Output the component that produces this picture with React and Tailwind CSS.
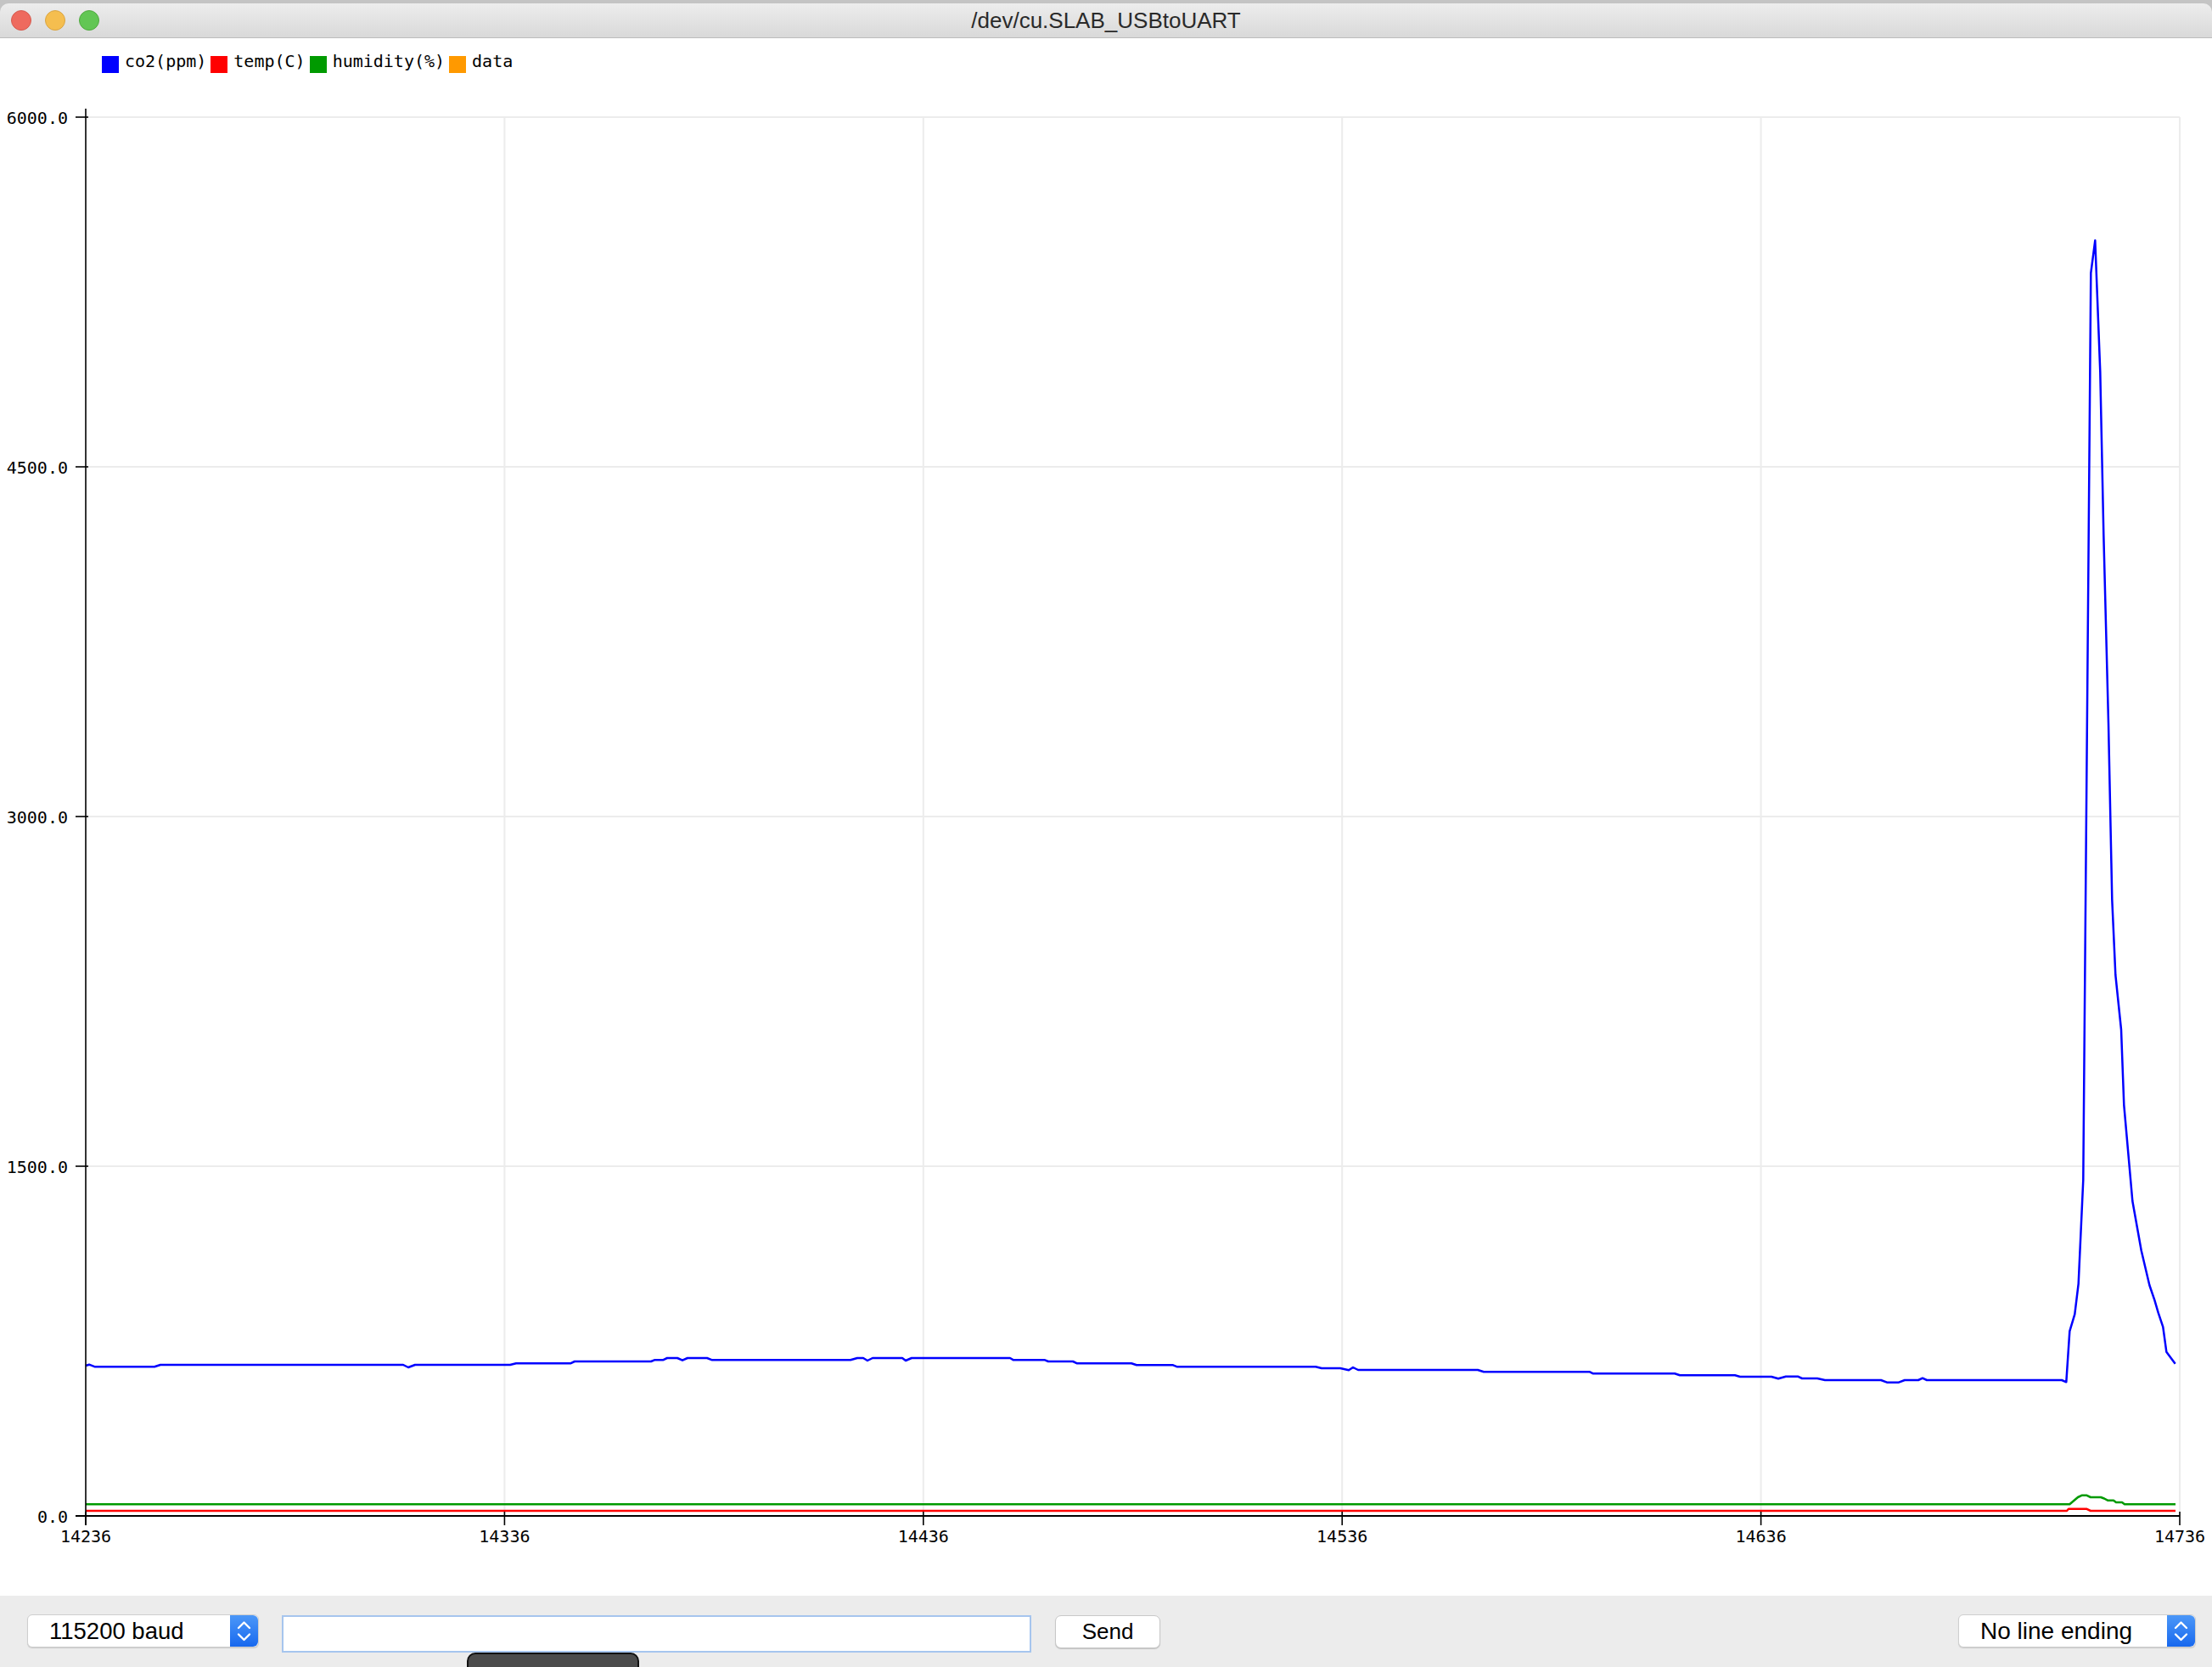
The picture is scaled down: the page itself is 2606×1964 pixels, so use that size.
import React from "react";

const BLUE = [
  [101, 1609], [105, 1607.7], [112, 1610.3], [182, 1610.3], [189, 1608], [475, 1608], [481, 1611], [489, 1608],
  [601, 1608], [608, 1606.3], [672, 1606.3], [677, 1604], [767, 1604], [771, 1602.3], [781, 1602.3], [786, 1600],
  [798, 1600], [804, 1602.7], [810, 1600], [833, 1600], [839, 1602.3], [1002, 1602.3], [1010, 1600], [1017, 1600],
  [1022, 1603], [1028, 1600], [1063, 1600], [1067, 1603], [1074, 1600], [1190, 1600], [1194, 1602.3], [1231, 1602.3],
  [1235, 1604], [1264, 1604], [1269, 1606.3], [1333, 1606.3], [1339, 1608.3], [1382, 1608.3], [1387, 1610.3],
  [1550, 1610.3], [1557, 1612], [1579, 1612], [1589, 1614.3], [1594, 1611], [1600, 1614], [1741, 1614],
  [1748, 1616.3], [1873, 1616.3], [1877, 1618.3], [1973, 1618.3], [1979, 1620.3], [2044, 1620.3], [2050, 1622],
  [2087, 1622], [2095, 1624.3], [2104, 1621.7], [2118, 1621.7], [2123, 1624], [2141, 1624], [2150, 1626],
  [2216, 1626], [2223, 1628.7], [2237, 1628.7], [2244, 1626], [2260, 1626], [2265, 1623.7], [2270, 1626],
  [2429, 1626], [2434.3, 1628.3], [2438.3, 1568.3], [2444.3, 1548.3], [2448.7, 1512.3], [2454.3, 1390],
  [2463.3, 321.7], [2468.3, 283.3], [2474.3, 438.4], [2478.3, 630], [2484, 851.7], [2488.3, 1060],
  [2492.3, 1148.7], [2499, 1213], [2502.3, 1301.8], [2512.3, 1415], [2522.7, 1473.3], [2532.3, 1514],
  [2538.3, 1531.7], [2542.7, 1546.7], [2548.3, 1563.3], [2552.3, 1592.7], [2562.7, 1606.7],
];

const GREEN = [
  [101, 1772.3], [2438.3, 1772.3], [2448, 1764], [2453, 1761.7], [2458, 1761.7], [2463, 1764], [2475, 1764],
  [2479, 1765.5], [2483, 1767.7], [2490, 1767.7], [2493, 1770], [2500, 1770], [2503, 1772.3], [2563, 1772.3],
];

const RED = [
  [101, 1780], [2435, 1780], [2437, 1777.7], [2458, 1777.7], [2463, 1780], [2563, 1780],
];

const toPath = (pts) => "M" + pts.map((p) => p[0] + "," + p[1]).join(" L");

const X0 = 101;
const X1 = 2568;
const Y_TOP = 138;
const Y0 = 1786;
const yTicks = [
  { label: "6000.0", y: 138 },
  { label: "4500.0", y: 550 },
  { label: "3000.0", y: 962 },
  { label: "1500.0", y: 1374 },
  { label: "0.0", y: 1786 },
];
const xTicks = [14236, 14336, 14436, 14536, 14636, 14736].map((v, i) => ({
  label: String(v),
  x: X0 + ((X1 - X0) / 5) * i,
}));

function Chart() {
  const mono = "'DejaVu Sans Mono', 'Liberation Mono', monospace";
  return (
    <svg width="2606" height="1780" viewBox="0 100 2606 1780" className="block shrink-0">
      {/* grid */}
      {yTicks.slice(0, 4).map((t) => (
        <line key={t.label} x1={X0} x2={X1} y1={t.y} y2={t.y} stroke="#ececec" strokeWidth="2" />
      ))}
      {xTicks.slice(1).map((t) => (
        <line key={t.label} x1={t.x} x2={t.x} y1={Y_TOP} y2={Y0} stroke="#ececec" strokeWidth="2" />
      ))}
      {/* data */}
      <path d={toPath(RED)} fill="none" stroke="#ff0000" strokeWidth="2.5" strokeLinejoin="round" />
      <path d={toPath(GREEN)} fill="none" stroke="#009a00" strokeWidth="2.5" strokeLinejoin="round" />
      <path d={toPath(BLUE)} fill="none" stroke="#0000ff" strokeWidth="2.5" strokeLinejoin="round" />
      {/* axes */}
      <line x1={X0} x2={X0} y1={128} y2={1797} stroke="#000" strokeWidth="1.6" />
      <line x1={89} x2={X1} y1={Y0} y2={Y0} stroke="#000" strokeWidth="2" />
      {yTicks.map((t) => (
        <g key={t.label}>
          <line x1={89} x2={104} y1={t.y} y2={t.y} stroke="#000" strokeWidth="1.6" />
          <text x={80} y={t.y + 7.5} textAnchor="end" fontFamily={mono} fontSize="20" fill="#000">
            {t.label}
          </text>
        </g>
      ))}
      {xTicks.map((t) => (
        <g key={t.label}>
          <line x1={t.x} x2={t.x} y1={1781} y2={1797} stroke="#000" strokeWidth="1.6" />
          <text x={t.x} y={1817} textAnchor="middle" fontFamily={mono} fontSize="20" fill="#000">
            {t.label}
          </text>
        </g>
      ))}
    </svg>
  );
}

function Stepper() {
  return (
    <div className="w-[33px] h-full shrink-0 rounded-r-[6px] bg-gradient-to-b from-[#4b97f8] to-[#1768ee] flex items-center justify-center">
      <svg width="33" height="39" viewBox="0 0 33 39">
        <polyline points="10,16 16.5,9.5 23,16" fill="none" stroke="#fff" strokeWidth="2.4" strokeLinecap="round" strokeLinejoin="round" />
        <polyline points="10,23.5 16.5,30 23,23.5" fill="none" stroke="#fff" strokeWidth="2.4" strokeLinecap="round" strokeLinejoin="round" />
      </svg>
    </div>
  );
}

function LegendItem({ color, label }) {
  return (
    <div className="flex items-start gap-[7px]">
      <div className={"w-[20px] h-[20px] mt-[4px] shrink-0 " + color} />
      <span className="text-[20px] leading-[20px] text-black font-['DejaVu_Sans_Mono','Liberation_Mono',monospace]">
        {label}
      </span>
    </div>
  );
}

export default function App() {
  return (
    <div className="w-[2606px] h-[1964px] overflow-hidden bg-white flex flex-col font-['Liberation_Sans',Arial,sans-serif]">
      {/* title bar */}
      <div className="h-[45px] shrink-0 bg-[#c4c4c4] pt-[4px]">
        <div className="h-[41px] rounded-t-[10px] bg-gradient-to-b from-[#ededed] to-[#d9d9d9] border-b border-[#bdbdbd] grid grid-cols-[1fr_auto_1fr] items-center">
          <div className="flex gap-[16px] pl-[13px]">
            <div className="w-[24px] h-[24px] rounded-full bg-[#ee6a5e] border border-[#d65a4e]" />
            <div className="w-[24px] h-[24px] rounded-full bg-[#f5be4f] border border-[#d9a441]" />
            <div className="w-[24px] h-[24px] rounded-full bg-[#62c654] border border-[#50a940]" />
          </div>
          <span className="text-[26px] leading-[30px] text-[#2a2a2a]">/dev/cu.SLAB_USBtoUART</span>
          <div />
        </div>
      </div>

      {/* legend */}
      <div className="h-[55px] shrink-0 pt-[17px] pl-[120px] flex items-start gap-[5px]">
        <LegendItem color="bg-[#0000ff]" label="co2(ppm)" />
        <LegendItem color="bg-[#ff0000]" label="temp(C)" />
        <LegendItem color="bg-[#009a00]" label="humidity(%)" />
        <LegendItem color="bg-[#ff9900]" label="data" />
      </div>

      <Chart />

      {/* bottom bar */}
      <div className="relative h-[84px] shrink-0 bg-[#ececec] flex items-start pt-[22px] pl-[32px] pr-[19px]">
        <div className="w-[273px] h-[39px] flex rounded-[6px] bg-white border border-[#cfcfcf] shadow-[0_1px_1px_rgba(0,0,0,0.15)]">
          <div className="flex-1 flex items-center pl-[25px] text-[27.5px] text-black">115200 baud</div>
          <Stepper />
        </div>
        <div className="ml-[27px] mt-[1px] w-[883px] h-[44px] bg-white border-2 border-[#a6c5ee]" />
        <div className="ml-[28px] mt-[1px] w-[124px] h-[39px] rounded-[7px] bg-white border border-[#c8c8c8] shadow-[0_1px_1px_rgba(0,0,0,0.18)] flex items-center justify-center text-[26px] text-black">
          Send
        </div>
        <div className="ml-auto w-[280px] h-[39px] flex rounded-[6px] bg-white border border-[#cfcfcf] shadow-[0_1px_1px_rgba(0,0,0,0.15)]">
          <div className="flex-1 flex items-center pl-[25px] text-[28px] text-black">No line ending</div>
          <Stepper />
        </div>
        {/* tooltip peeking from the bottom */}
        <div className="absolute left-[550px] top-[67px] w-[203px] h-[50px] rounded-[10px] bg-[#4b4b4b] border-2 border-[#111] pl-[32px] pt-[10px] text-[26px] text-white">
          Serial plotter
        </div>
      </div>
    </div>
  );
}
